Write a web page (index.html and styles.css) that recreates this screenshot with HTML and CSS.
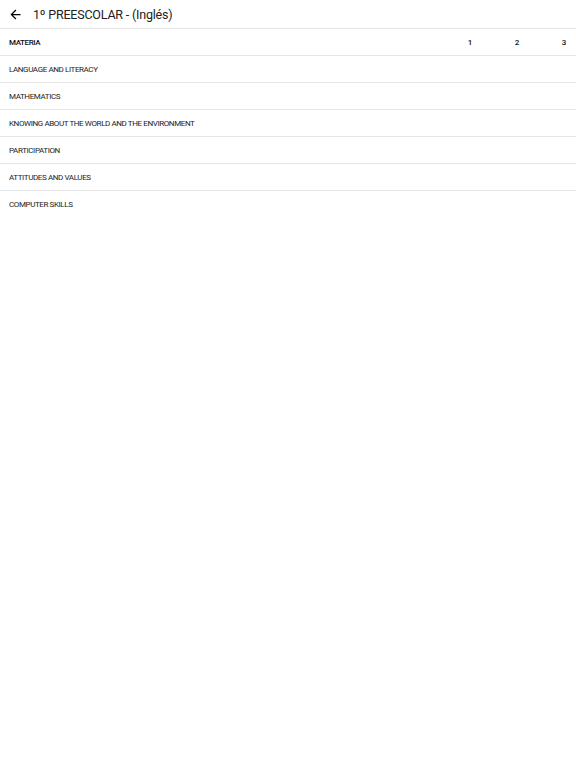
FILE: index.html
```html
<!DOCTYPE html>
<html>
<head>
<meta charset="utf-8">
<link rel="stylesheet" href="styles.css">
</head>
<body>
<header class="appbar">
  <svg class="back" viewBox="0 0 24 24" width="15" height="15"><path d="M20 11H7.83l5.59-5.59L12 4l-8 8 8 8 1.41-1.41L7.83 13H20v-2z" fill="#000"/></svg>
  <h1 class="title">1º PREESCOLAR - (Inglés)</h1>
</header>
<div class="table">
  <div class="row head"><span class="name">MATERIA</span><span class="col">1</span><span class="col">2</span><span class="col">3</span></div>
  <div class="row"><span class="name">LANGUAGE AND LITERACY</span><span class="col"></span><span class="col"></span><span class="col"></span></div>
  <div class="row"><span class="name">MATHEMATICS</span><span class="col"></span><span class="col"></span><span class="col"></span></div>
  <div class="row"><span class="name">KNOWING ABOUT THE WORLD AND THE ENVIRONMENT</span><span class="col"></span><span class="col"></span><span class="col"></span></div>
  <div class="row"><span class="name">PARTICIPATION</span><span class="col"></span><span class="col"></span><span class="col"></span></div>
  <div class="row"><span class="name">ATTITUDES AND VALUES</span><span class="col"></span><span class="col"></span><span class="col"></span></div>
  <div class="row last"><span class="name">COMPUTER SKILLS</span><span class="col"></span><span class="col"></span><span class="col"></span></div>
</div>
</body>
</html>
```
FILE: styles.css
```css
html, body { margin: 0; padding: 0; background: #fff; }
body { font-family: Roboto, "Noto Sans", sans-serif; color: #212121; width: 576px; }
.appbar { height: 29px; display: flex; align-items: center; border-bottom: 1px solid #e6e6e6; box-sizing: border-box; padding-left: 8px; }
.back { margin-right: 10px; display: block; }
.title { margin: 0; font-size: 12.5px; letter-spacing: -0.2px; font-weight: 400; color: #212121; }
.row { display: grid; grid-template-columns: 1fr 47px 47px 47px; align-items: center; height: 27px; box-sizing: border-box; border-bottom: 1px solid #e6e6e6; padding: 0 10px 0 9px; font-size: 8px; letter-spacing: -0.4px; color: #222; }
.row.last { border-bottom: none; }
.col { text-align: right; }
.head { font-weight: 500; color: #111; }
```
